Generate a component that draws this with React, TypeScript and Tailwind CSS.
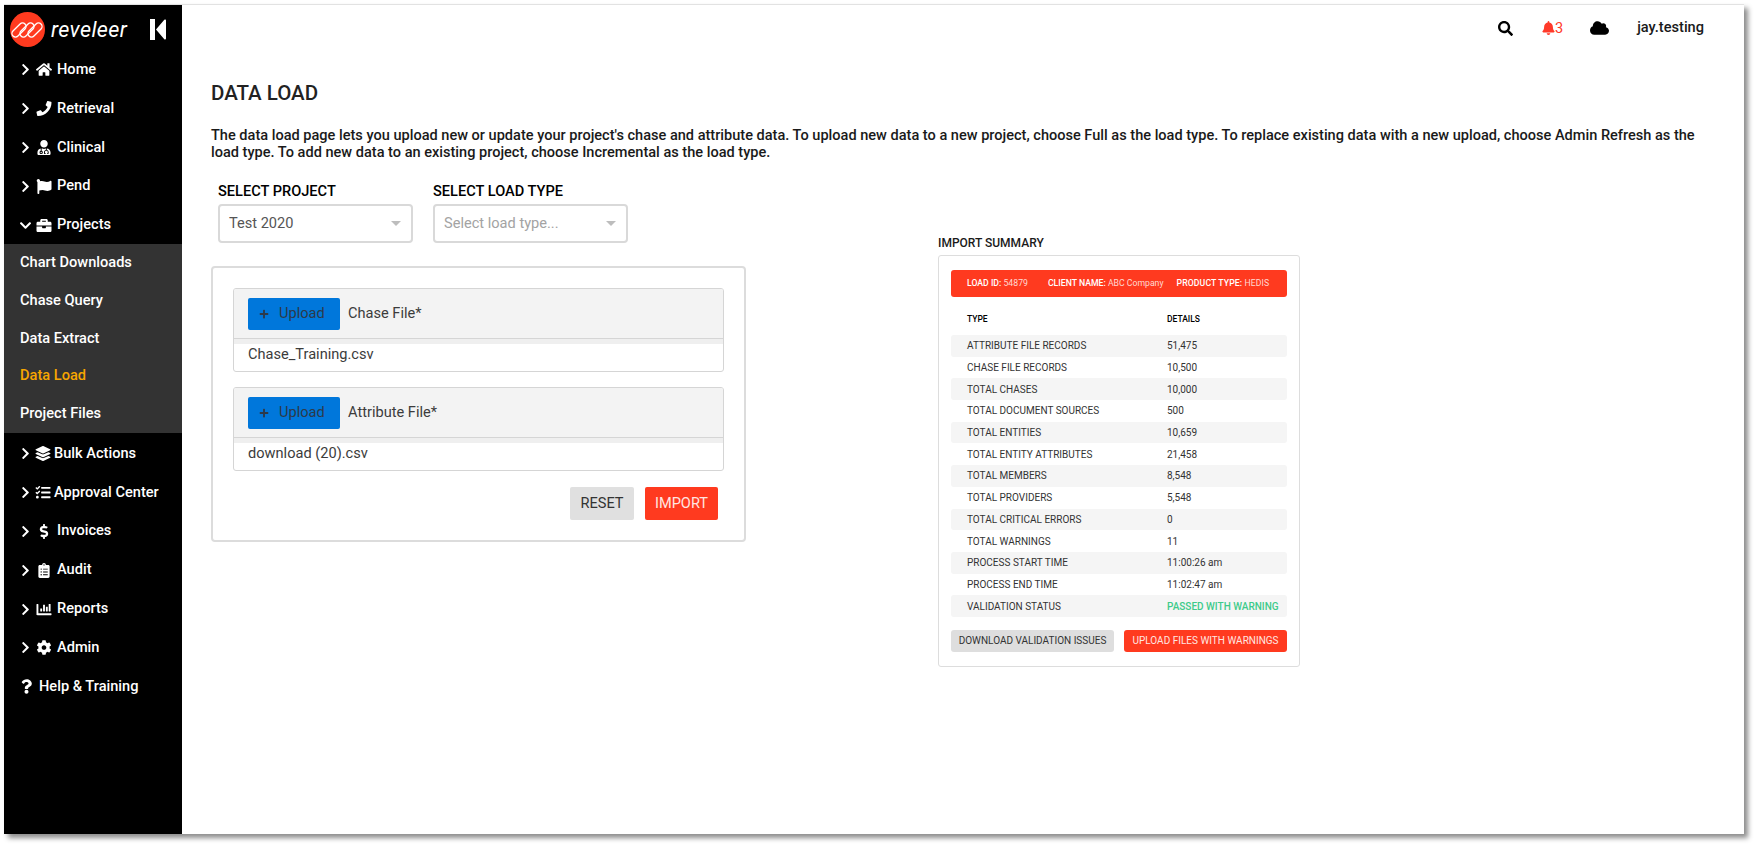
import React from 'react';
import {
    FaBell,
    FaBriefcase,
    FaChartBar,
    FaChevronDown,
    FaChevronRight,
    FaClipboardList,
    FaCloud,
    FaCog,
    FaDollarSign,
    FaFlag,
    FaHome,
    FaLayerGroup,
    FaPhone,
    FaPlus,
    FaQuestion,
    FaSearch,
    FaTasks,
    FaUserMd,
} from 'react-icons/fa';
import type { IconType } from 'react-icons';

const topItems: { label: string; icon: IconType; open?: boolean }[] = [
    { label: 'Home', icon: FaHome },
    { label: 'Retrieval', icon: FaPhone },
    { label: 'Clinical', icon: FaUserMd },
    { label: 'Pend', icon: FaFlag },
    { label: 'Projects', icon: FaBriefcase, open: true },
];

const subItems = ['Chart Downloads', 'Chase Query', 'Data Extract', 'Data Load', 'Project Files'];

const bottomItems: { label: string; icon: IconType; tight?: boolean }[] = [
    { label: 'Bulk Actions', icon: FaLayerGroup, tight: true },
    { label: 'Approval Center', icon: FaTasks, tight: true },
    { label: 'Invoices', icon: FaDollarSign },
    { label: 'Audit', icon: FaClipboardList },
    { label: 'Reports', icon: FaChartBar },
    { label: 'Admin', icon: FaCog },
];

const summaryRows: [string, string][] = [
    ['ATTRIBUTE FILE RECORDS', '51,475'],
    ['CHASE FILE RECORDS', '10,500'],
    ['TOTAL CHASES', '10,000'],
    ['TOTAL DOCUMENT SOURCES', '500'],
    ['TOTAL ENTITIES', '10,659'],
    ['TOTAL ENTITY ATTRIBUTES', '21,458'],
    ['TOTAL MEMBERS', '8,548'],
    ['TOTAL PROVIDERS', '5,548'],
    ['TOTAL CRITICAL ERRORS', '0'],
    ['TOTAL WARNINGS', '11'],
    ['PROCESS START TIME', '11:00:26 am'],
    ['PROCESS END TIME', '11:02:47 am'],
    ['VALIDATION STATUS', 'PASSED WITH WARNING'],
];

// three looped ribbons, slanted to the upper right
const Logo = () => (
    <svg width="35" height="35" viewBox="0 0 35 35" className="shrink-0">
        <circle cx="17.5" cy="17.5" r="17.5" fill="#ff3a1f" />
        <g fill="none" stroke="#fff" strokeWidth="1.3">
            <rect x="0.5" y="14.5" width="17" height="7" rx="3.5" transform="rotate(-45 9 18)" />
            <rect x="8.5" y="14.5" width="17" height="7" rx="3.5" transform="rotate(-45 17 18)" />
            <rect x="16.5" y="14.5" width="17" height="7" rx="3.5" transform="rotate(-45 25 18)" />
        </g>
    </svg>
);

const CollapseIcon = () => (
    <svg width="17" height="21" viewBox="0 0 17 21" className="shrink-0">
        <rect x="0" y="0" width="5" height="21" fill="#fff" />
        <path d="M16 1.500v18a1 1 0 0 1-1.700 0.700L6 10.500l8.300-9.700a1 1 0 0 1 1.700 0.700z" fill="#fff" />
    </svg>
);

const NavRow = ({ label, icon: Icon, open, tight }: { label: string; icon: IconType; open?: boolean; tight?: boolean }) => (
    <div className="flex h-[38.8px] items-center pl-[14px] text-[14.6px] font-medium text-white">
        <span className="flex w-[15px] justify-center">
            {open ? <FaChevronDown className="h-[13px] w-[13px]" /> : <FaChevronRight className="h-[13px] w-[13px]" />}
        </span>
        <span className={tight ? 'ml-[2px] flex w-[16px] justify-center' : 'ml-[3px] flex w-[16px] justify-center'}>
            <Icon className="h-[15px] w-[16px]" />
        </span>
        <span className={tight ? 'ml-[3px]' : 'ml-[5px]'}>{label}</span>
    </div>
);

const Sidebar = () => (
    <aside className="flex h-full w-[178px] shrink-0 flex-col bg-black">
        <div className="flex h-[45.5px] items-center pl-[6px] pt-[3px]">
            <Logo />
            <span className="ml-[6px] w-[77px] whitespace-nowrap text-[21.5px] italic leading-none tracking-[0.4px] text-white">reveleer</span>
            <span className="ml-[22px] flex items-center">
                <CollapseIcon />
            </span>
        </div>
        <div>
            {topItems.map(item => (
                <NavRow key={item.label} {...item} />
            ))}
        </div>
        <div className="bg-[#333333]">
            {subItems.map(item => (
                <div
                    key={item}
                    className={
                        item === 'Data Load'
                            ? 'flex h-[37.7px] items-center pl-[16px] text-[14.6px] font-medium text-[#f7a600]'
                            : 'flex h-[37.7px] items-center pl-[16px] text-[14.6px] font-medium text-white'
                    }
                >
                    {item}
                </div>
            ))}
        </div>
        <div className="mt-[1.5px]">
            {bottomItems.map(item => (
                <NavRow key={item.label} {...item} />
            ))}
            <div className="flex h-[38.8px] items-center pl-[16px] text-[14.6px] font-medium text-white">
                <span className="flex w-[12px] justify-center">
                    <FaQuestion className="h-[15px] w-[11px]" />
                </span>
                <span className="ml-[7px]">Help &amp; Training</span>
            </div>
        </div>
    </aside>
);

const UploadPanel = ({ label, file }: { label: string; file: string }) => (
    <div className="overflow-hidden rounded-[3px] border border-[#d5d5d5]">
        <div className="flex h-[50px] items-center gap-[8px] border-b border-[#d5d5d5] bg-[#f3f3f3] pl-[14px]">
            <button className="flex h-[32px] w-[92px] items-center rounded-[2px] bg-[#0077db] pl-[11px] text-[14.6px] text-[#2d3a4a]">
                <FaPlus className="h-[10px] w-[10px]" />
                <span className="ml-[10px]">Upload</span>
            </button>
            <span className="text-[14.6px] text-[#3c3c3c]">{label}</span>
        </div>
        <div className="h-[5px] bg-[#efefef]" />
        <div className="flex h-[27px] items-start pl-[14px] text-[14.6px] text-[#3c3c3c]">{file}</div>
    </div>
);

const SelectBox = ({ label, value, placeholder }: { label: string; value: string; placeholder?: boolean }) => (
    <div>
        <div className="mb-[5px] text-[14.6px] font-medium leading-[16px] text-black">{label}</div>
        <div className="flex h-[39px] w-[194.5px] items-center justify-between rounded-[4px] border-2 border-[#d9d9d9] pl-[9px] pr-[10px]">
            <span className={placeholder ? 'text-[14.6px] text-[#a3a3a3]' : 'text-[14.6px] text-[#555555]'}>{value}</span>
            <span className="h-0 w-0 border-x-[5px] border-t-[5px] border-x-transparent border-t-[#bdbdbd]" />
        </div>
    </div>
);

const Summary = () => (
    <section className="ml-[192px] mt-[2px] w-[362px]">
        <div className="text-[12px] font-medium leading-[14px] text-[#1a1a1a]">IMPORT SUMMARY</div>
        <div className="mt-[5px] h-[412px] rounded-[3px] border border-[#dddddd] px-[12px] pt-[14px]">
            <div className="flex h-[27px] items-center rounded-[3px] bg-[#ff3a1f] pl-[16px] text-[8.7px] text-[#ffd9d2]">
                <span><b className="font-medium text-white">LOAD ID:</b> 54879</span>
                <span className="ml-[20px]"><b className="font-medium text-white">CLIENT NAME:</b> ABC Company</span>
                <span className="ml-[13px] tracking-[0.1px]"><b className="font-medium text-white">PRODUCT TYPE:</b> HEDIS</span>
            </div>
            <div className="flex h-[38px] items-center pl-[16px] pt-[7px] text-[8.5px] font-medium text-black">
                <span className="w-[200px]">TYPE</span>
                <span>DETAILS</span>
            </div>
            <div>
                {summaryRows.map(([type, details], i) => (
                    <div
                        key={type}
                        className={
                            i % 2 === 0
                                ? 'flex h-[21.7px] items-center rounded-[3px] bg-[#f5f5f5] pl-[16px] text-[10px] text-[#333333]'
                                : 'flex h-[21.7px] items-center rounded-[3px] pl-[16px] text-[10px] text-[#333333]'
                        }
                    >
                        <span className="w-[200px]">{type}</span>
                        <span className={details.startsWith('PASSED') ? 'font-medium text-[#3ecb8a]' : ''}>{details}</span>
                    </div>
                ))}
            </div>
            <div className="mt-[13px] flex justify-between">
                <button className="h-[22px] w-[163px] rounded-[3px] bg-[#dedede] text-[10px] text-[#333333]">DOWNLOAD VALIDATION ISSUES</button>
                <button className="h-[22px] w-[163px] rounded-[3px] bg-[#ff3a1f] text-[10px] text-[#ffe6e1]">UPLOAD FILES WITH WARNINGS</button>
            </div>
        </div>
    </section>
);

const App: React.FC = () => {
    return (
        <div className="h-[846px] w-[1756px] overflow-hidden bg-white pl-[4px] pt-[4px] font-['Roboto',sans-serif]">
            <div className="flex h-[830px] w-[1740px] border-t border-[#e2e2e2] shadow-[4px_4px_5px_rgba(0,0,0,0.45)]">
                <Sidebar />
                <main className="flex-1 bg-white">
                    <header className="flex h-[46px] items-center justify-end pr-[40px] text-[14.6px] text-[#1a1a1a]">
                        <FaSearch className="h-[15px] w-[15px] text-black" />
                        <span className="ml-[29px] flex items-center text-[#ff3a2a]">
                            <FaBell className="h-[14px] w-[13px]" />
                            <span className="leading-none">3</span>
                        </span>
                        <FaCloud className="ml-[27px] h-[16px] w-[19px] text-black" />
                        <span className="ml-[28px] font-medium">jay.testing</span>
                    </header>
                    <div className="pl-[29px] pr-[24px]">
                        <h1 className="mt-[28px] text-[20.5px] font-medium leading-[28px] text-[#222222]">DATA LOAD</h1>
                        <p className="mt-[21px] text-[14.55px] font-medium leading-[16.5px] text-[#1a1a1a]">
                            The data load page lets you upload new or update your project's chase and attribute data. To upload new data to a new project, choose Full as the load type. To replace existing data with a new upload, choose Admin Refresh as the load type. To add new data to an existing project, choose Incremental as the load type.
                        </p>
                        <div className="mt-[22px] flex">
                            <div className="w-[535px]">
                                <div className="flex gap-[20.5px] pl-[7px]">
                                    <SelectBox label="SELECT PROJECT" value="Test 2020" />
                                    <SelectBox label="SELECT LOAD TYPE" value="Select load type..." placeholder />
                                </div>
                                <div className="mt-[23px] rounded-[4px] border-2 border-[#dcdcdc] px-[20px] pt-[20px]">
                                    <div className="flex flex-col gap-[15px]">
                                        <UploadPanel label="Chase File*" file="Chase_Training.csv" />
                                        <UploadPanel label="Attribute File*" file="download (20).csv" />
                                    </div>
                                    <div className="mb-[20px] mt-[16px] flex justify-end gap-[11px] pr-[6px]">
                                        <button className="h-[33px] w-[64px] rounded-[2px] bg-[#e0e0e0] text-[14.6px] text-[#333333]">RESET</button>
                                        <button className="h-[33px] w-[73px] rounded-[2px] bg-[#ff3a1f] text-[14.6px] text-[#ffe6e1]">IMPORT</button>
                                    </div>
                                </div>
                            </div>
                            <div className="pt-[51px]">
                                <Summary />
                            </div>
                        </div>
                    </div>
                </main>
            </div>
        </div>
    );
};

export default App;
